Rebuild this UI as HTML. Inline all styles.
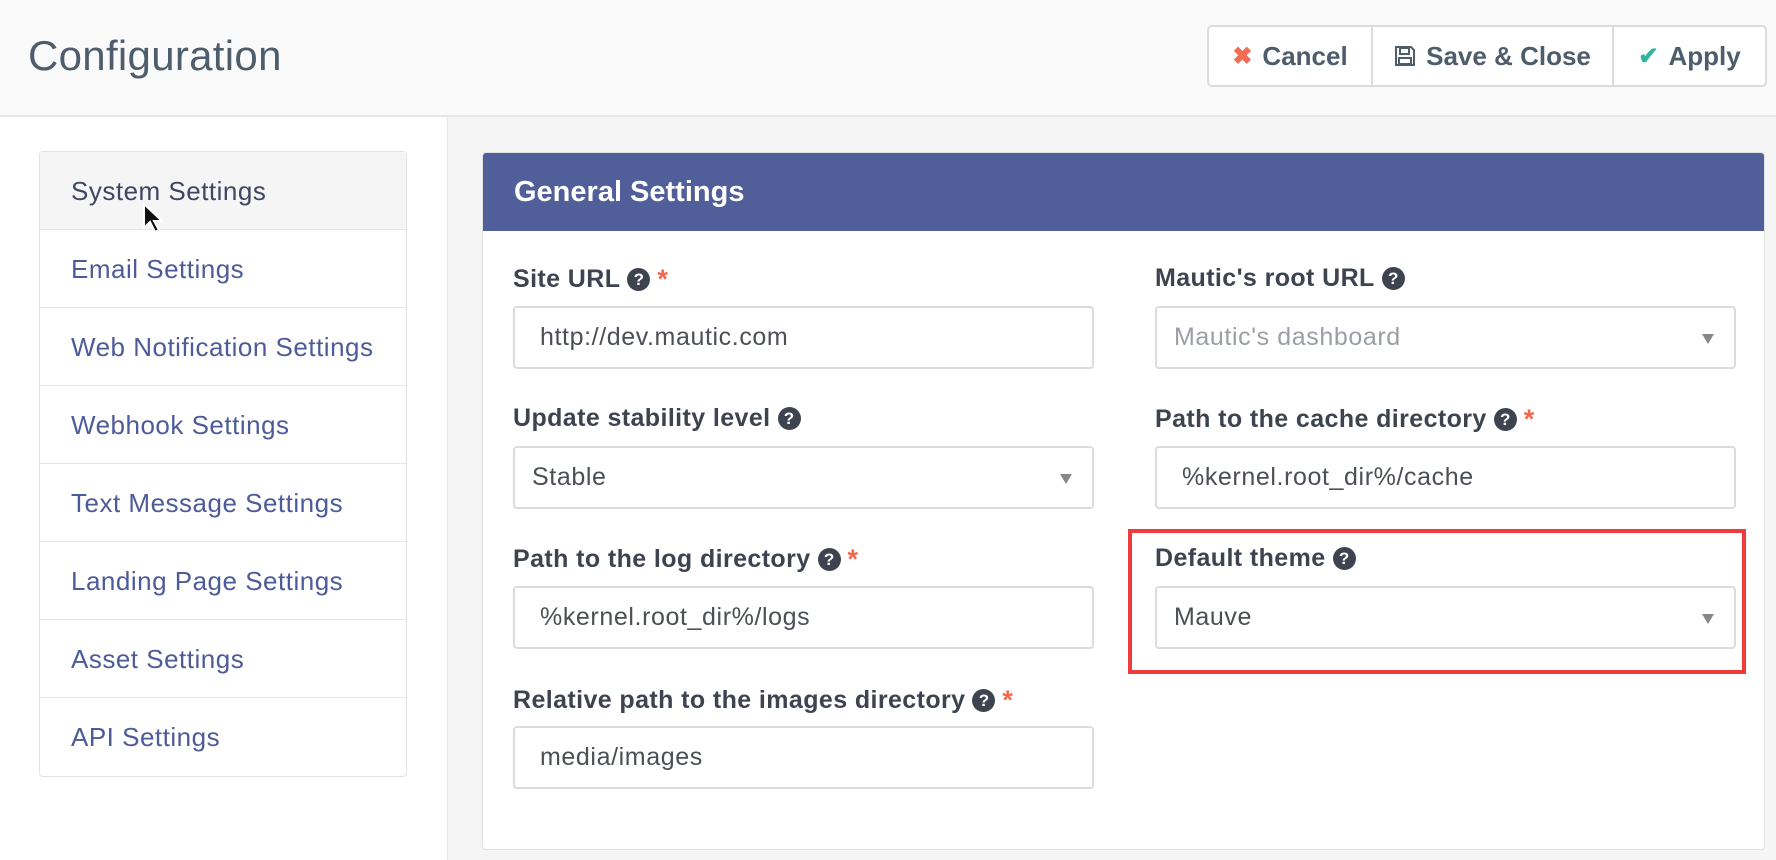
<!DOCTYPE html>
<html><head><meta charset="utf-8"><style>
*{box-sizing:border-box;margin:0;padding:0}
body{width:1776px;height:860px;overflow:hidden;font-family:"Liberation Sans",sans-serif;background:#f5f5f5;position:relative}
.hdr{position:absolute;left:0;top:0;width:1776px;height:117px;background:#fafafa;border-bottom:2px solid #e6e6e6}
.title{position:absolute;left:28px;top:32px;font-size:42px;color:#4e5d6c;letter-spacing:0.3px}
.btns{position:absolute;left:1207px;top:25px;width:560px;height:62px;background:#fff;border:2px solid #dcdcdc;border-radius:5px;display:flex}
.btn{height:100%;display:flex;align-items:center;justify-content:center;font-size:26px;font-weight:bold;color:#4e5d6c;border-right:2px solid #dcdcdc}
.btn:last-child{border-right:none}
.left{position:absolute;left:0;top:117px;width:448px;height:743px;background:#fff;border-right:1px solid #e6e6e6}
.side{position:absolute;left:39px;top:151px;width:368px;border:1px solid #e3e3e3;border-radius:4px;background:#fff}
.side div{height:78px;border-bottom:1px solid #e6e6e6;padding-left:31px;line-height:78px;font-size:26px;letter-spacing:0.5px;color:#4e5b99}
.side div:last-child{border-bottom:none}
.side div.act{background:#f5f5f5;color:#3f4665}
.panel{position:absolute;left:482px;top:152px;width:1283px;height:698px;background:#fff;border:1px solid #e3e3e3;border-radius:4px;overflow:hidden}
.ph{height:78px;background:#505e9a;color:#fff;font-weight:bold;font-size:29px;padding-left:31px;line-height:78px}
.lbl{position:absolute;font-size:25px;letter-spacing:0.4px;font-weight:bold;color:#3d4450;display:flex;align-items:center;gap:7px}
.q{width:23px;height:23px;border-radius:50%;background:#3d4450;color:#fff;font-size:17px;font-weight:bold;display:inline-flex;align-items:center;justify-content:center;letter-spacing:0}
.star{color:#f3674c;font-size:27px}
.inp{position:absolute;width:581px;height:63px;border:2px solid #dcdcdc;border-radius:4px;font-size:25px;letter-spacing:0.6px;color:#4b4f56;line-height:59px;padding-left:25px;background:#fff}
.sel{padding-left:17px}
.sel::after{content:"";position:absolute;right:20px;top:26px;border-left:6px solid transparent;border-right:6px solid transparent;border-top:10px solid #888}
.red{position:absolute;left:1128px;top:529px;width:618px;height:145px;border:4px solid #ee3c3c}
</style></head><body>
<div class="hdr"><div class="title">Configuration</div>
<div class="btns">
<div class="btn" style="width:164px"><span style="color:#f26b55;margin-right:10px;font-size:24px">✖</span>Cancel</div>
<div class="btn" style="width:241px"><svg width="22" height="22" viewBox="0 0 22 22" style="margin-right:10px"><path d="M2 2h15l3 3v15H2z" fill="none" stroke="#4e5d6c" stroke-width="2"/><rect x="6" y="3" width="9" height="6" fill="none" stroke="#4e5d6c" stroke-width="2"/><rect x="5" y="13" width="12" height="6" fill="none" stroke="#4e5d6c" stroke-width="2"/></svg>Save &amp; Close</div>
<div class="btn" style="flex:1"><span style="color:#2fb59a;margin-right:10px;font-size:24px">✔</span>Apply</div>
</div></div>
<div class="left">
<div class="side" style="top:34px">
<div class="act">System Settings</div><div>Email Settings</div><div>Web Notification Settings</div><div>Webhook Settings</div><div>Text Message Settings</div><div>Landing Page Settings</div><div>Asset Settings</div><div>API Settings</div>
</div>
<svg style="position:absolute;left:142px;top:85px" width="22" height="32" viewBox="0 0 22 32"><path d="M2 2v24l6-6 5 10 4-2-5-9h8z" fill="#111" stroke="#fff" stroke-width="2"/></svg>
</div>
<div class="panel"><div class="ph">General Settings</div></div>
<div class="lbl" style="left:513px;top:264px">Site URL <span class="q">?</span><span class="star">*</span></div>
<div class="inp" style="left:513px;top:306px">http://dev.mautic.com</div>
<div class="lbl" style="left:1155px;top:264px">Mautic's root URL <span class="q">?</span></div>
<div class="inp sel" style="left:1155px;top:306px;color:#9a9ea5">Mautic's dashboard</div>
<div class="lbl" style="left:513px;top:404px">Update stability level <span class="q">?</span></div>
<div class="inp sel" style="left:513px;top:446px">Stable</div>
<div class="lbl" style="left:1155px;top:404px">Path to the cache directory <span class="q">?</span><span class="star">*</span></div>
<div class="inp" style="left:1155px;top:446px">%kernel.root_dir%/cache</div>
<div class="lbl" style="left:513px;top:544px">Path to the log directory <span class="q">?</span><span class="star">*</span></div>
<div class="inp" style="left:513px;top:586px">%kernel.root_dir%/logs</div>
<div class="lbl" style="left:1155px;top:544px">Default theme <span class="q">?</span></div>
<div class="inp sel" style="left:1155px;top:586px">Mauve</div>
<div class="lbl" style="left:513px;top:685px">Relative path to the images directory <span class="q">?</span><span class="star">*</span></div>
<div class="inp" style="left:513px;top:726px">media/images</div>
<div class="red"></div>
</body></html>
